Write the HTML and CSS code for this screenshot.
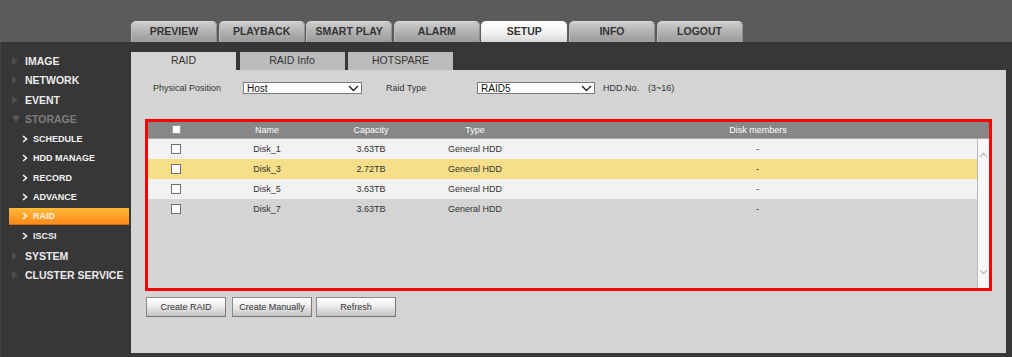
FILE: index.html
```html
<!DOCTYPE html>
<html>
<head>
<meta charset="utf-8">
<title>Setup - RAID</title>
<link rel="stylesheet" href="styles.css">
</head>
<body>
<header class="topbar">
  <nav class="tabs">
    <div class="tab">PREVIEW</div>
    <div class="tab">PLAYBACK</div>
    <div class="tab">SMART PLAY</div>
    <div class="tab">ALARM</div>
    <div class="tab active">SETUP</div>
    <div class="tab">INFO</div>
    <div class="tab">LOGOUT</div>
  </nav>
</header>
<div class="main">
  <aside class="sidebar">
    <ul class="menu">
      <li class="m1"><span class="tri"></span><span>IMAGE</span></li>
      <li class="m1"><span class="tri"></span><span>NETWORK</span></li>
      <li class="m1"><span class="tri"></span><span>EVENT</span></li>
      <li class="m1 open"><span class="tri down"></span><span>STORAGE</span></li>
      <li class="m2"><span class="m2-in"><svg class="chev" width="6" height="8" viewBox="0 0 6 8"><polyline points="1,1 4.5,4 1,7" fill="none" stroke="#f2f2f2" stroke-width="1.6"/></svg>SCHEDULE</span></li>
      <li class="m2"><span class="m2-in"><svg class="chev" width="6" height="8" viewBox="0 0 6 8"><polyline points="1,1 4.5,4 1,7" fill="none" stroke="#f2f2f2" stroke-width="1.6"/></svg>HDD MANAGE</span></li>
      <li class="m2"><span class="m2-in"><svg class="chev" width="6" height="8" viewBox="0 0 6 8"><polyline points="1,1 4.5,4 1,7" fill="none" stroke="#f2f2f2" stroke-width="1.6"/></svg>RECORD</span></li>
      <li class="m2"><span class="m2-in"><svg class="chev" width="6" height="8" viewBox="0 0 6 8"><polyline points="1,1 4.5,4 1,7" fill="none" stroke="#f2f2f2" stroke-width="1.6"/></svg>ADVANCE</span></li>
      <li class="m2 sel"><span class="m2-in"><svg class="chev" width="6" height="8" viewBox="0 0 6 8"><polyline points="1,1 4.5,4 1,7" fill="none" stroke="#fff4e0" stroke-width="1.6"/></svg>RAID</span></li>
      <li class="m2"><span class="m2-in"><svg class="chev" width="6" height="8" viewBox="0 0 6 8"><polyline points="1,1 4.5,4 1,7" fill="none" stroke="#f2f2f2" stroke-width="1.6"/></svg>ISCSI</span></li>
      <li class="m1"><span class="tri"></span><span>SYSTEM</span></li>
      <li class="m1"><span class="tri"></span><span>CLUSTER SERVICE</span></li>
    </ul>
  </aside>
  <section class="content">
    <div class="subtabs">
      <div class="subtab active">RAID</div>
      <div class="subtab">RAID Info</div>
      <div class="subtab">HOTSPARE</div>
    </div>
    <div class="panel">
      <div class="form-row">
        <label class="lbl lbl-pos">Physical Position</label>
        <div class="select sel-host"><span>Host</span><svg width="11" height="7" viewBox="0 0 11 7"><polyline points="1,1 5.5,5.5 10,1" fill="none" stroke="#222" stroke-width="1.4"/></svg></div>
        <label class="lbl lbl-type">Raid Type</label>
        <div class="select sel-type"><span>RAID5</span><svg width="11" height="7" viewBox="0 0 11 7"><polyline points="1,1 5.5,5.5 10,1" fill="none" stroke="#222" stroke-width="1.4"/></svg></div>
        <span class="lbl hdd">HDD.No.</span>
        <span class="lbl">(3~16)</span>
      </div>

      <div class="grid-box">
        <div class="grid-head">
          <div class="c c-chk"><span class="cb cb-head"></span></div>
          <div class="c c-name">Name</div>
          <div class="c c-cap">Capacity</div>
          <div class="c c-type">Type</div>
          <div class="c c-mem">Disk members</div>
        </div>
        <div class="grid-body">
          <div class="rows">
            <div class="row odd">
              <div class="c c-chk"><span class="cb"></span></div>
              <div class="c c-name">Disk_1</div>
              <div class="c c-cap">3.63TB</div>
              <div class="c c-type">General HDD</div>
              <div class="c c-mem">-</div>
            </div>
            <div class="row hover">
              <div class="c c-chk"><span class="cb"></span></div>
              <div class="c c-name">Disk_3</div>
              <div class="c c-cap">2.72TB</div>
              <div class="c c-type">General HDD</div>
              <div class="c c-mem">-</div>
            </div>
            <div class="row odd">
              <div class="c c-chk"><span class="cb"></span></div>
              <div class="c c-name">Disk_5</div>
              <div class="c c-cap">3.63TB</div>
              <div class="c c-type">General HDD</div>
              <div class="c c-mem">-</div>
            </div>
            <div class="row">
              <div class="c c-chk"><span class="cb"></span></div>
              <div class="c c-name">Disk_7</div>
              <div class="c c-cap">3.63TB</div>
              <div class="c c-type">General HDD</div>
              <div class="c c-mem">-</div>
            </div>
          </div>
          <div class="scroll">
            <svg width="9" height="6" viewBox="0 0 9 6"><polyline points="1,5 4.5,1.5 8,5" fill="none" stroke="#c4c4c4" stroke-width="1.6"/></svg>
            <svg width="9" height="6" viewBox="0 0 9 6"><polyline points="1,1 4.5,4.5 8,1" fill="none" stroke="#c4c4c4" stroke-width="1.6"/></svg>
          </div>
        </div>
      </div>

      <div class="buttons">
        <button class="btn">Create RAID</button>
        <button class="btn b2">Create Manually</button>
        <button class="btn b3">Refresh</button>
      </div>
    </div>
  </section>
</div>
</body>
</html>
```

FILE: styles.css
```css
* { box-sizing: border-box; }
html, body { margin: 0; padding: 0; }
body {
  width: 1012px;
  height: 357px;
  overflow: hidden;
  background: #373737;
  font-family: "Liberation Sans", Arial, sans-serif;
  color: #333;
}

/* ---------- top bar ---------- */
.topbar {
  height: 42px;
  background: #5b5b5b;
  display: flex;
  align-items: flex-end;
  padding-left: 131px;
}
.tabs { display: flex; }
.tab {
  width: 86px;
  height: 21px;
  margin-right: 1.6px;
  border-radius: 5px 5px 0 0;
  background: linear-gradient(#cdcdcd, #a7a7a7 70%, #9c9c9c);
  border-top: 1px solid #dadada;
  box-shadow: inset 1px 0 0 #bdbdbd, inset -1px 0 0 #8e8e8e;
  font-size: 10.5px;
  font-weight: bold;
  line-height: 19px;
  text-align: center;
  color: #333;
}
.tab.active {
  background: linear-gradient(#ffffff, #efefef 60%, #d6d6d6);
  border-top-color: #ffffff;
  box-shadow: none;
}

/* ---------- layout ---------- */
.main {
  display: flex;
  height: 315px;
}
.sidebar {
  width: 131px;
  flex: none;
  border-left: 1px solid #444;
}
.content {
  flex: 1;
  padding: 10px 6px 4px 0;
  display: flex;
  flex-direction: column;
}

/* ---------- sidebar menu ---------- */
.menu {
  list-style: none;
  margin: 0;
  padding: 9px 0 0 0;
}
.menu li {
  height: 19.5px;
  display: flex;
  align-items: center;
}
.m1 {
  padding-left: 11px;
  font-size: 10.5px;
  font-weight: bold;
  color: #ececec;
}
.tri {
  width: 0;
  height: 0;
  border-left: 6px solid #4e4e4e;
  border-top: 4px solid transparent;
  border-bottom: 4px solid transparent;
  margin-right: 7px;
}
.tri.down {
  border-left: 4px solid transparent;
  border-right: 4px solid transparent;
  border-top: 6px solid #595959;
  border-bottom: 0;
  margin-right: 5px;
}
.m1.open { color: #7d7d7d; }
.m2 {
  padding-left: 8px;
  font-size: 9px;
  font-weight: bold;
  color: #f2f2f2;
}
.m2-in {
  display: flex;
  align-items: center;
  width: 120px;
  height: 17px;
  padding-left: 13px;
}
.chev { margin-right: 5px; }
.m2.sel .m2-in {
  background: linear-gradient(#ffbb38, #ff9f2a 55%, #ff8a1c);
  border-bottom: 1px solid #d46a10;
  color: #fff4e4;
}

/* ---------- sub tabs ---------- */
.subtabs {
  display: flex;
  height: 18px;
}
.subtab {
  width: 105px;
  margin-right: 3.5px;
  background: #bcbcbc;
  font-size: 10.5px;
  line-height: 17px;
  text-align: center;
  color: #333;
}
.subtab.active { background: #d4d4d4; }

/* ---------- panel ---------- */
.panel {
  flex: 1;
  background: #d4d4d4;
  padding: 12px 0 0 14px;
}
.form-row {
  display: flex;
  align-items: center;
  height: 12px;
  padding-left: 8px;
}
.lbl {
  font-size: 9px;
  color: #333;
}
.lbl-pos { width: 90px; }
.lbl-type { width: 91px; }
.select {
  height: 12px;
  background: #fff;
  border: 1px solid #7a7a7a;
  display: flex;
  align-items: center;
  justify-content: space-between;
  padding: 0 2px 0 3px;
  font-size: 10px;
  color: #111;
}
.sel-host { width: 119px; margin-right: 24px; }
.sel-type { width: 118px; margin-right: 8px; }
.hdd { margin-right: 9px; }

/* ---------- grid ---------- */
.grid-box {
  margin-top: 25px;
  width: 847px;
  height: 172px;
  border: 3px solid #ff0000;
  display: flex;
  flex-direction: column;
}
.grid-head {
  height: 17px;
  flex: none;
  display: flex;
  background: #878787;
  border-bottom: 1px solid #a9a9a9;
  padding-right: 11px;
  color: #fff;
  font-size: 9px;
  align-items: center;
}
.c {
  text-align: center;
  display: flex;
  align-items: center;
  justify-content: center;
}
.c-chk { width: 56px; }
.c-name { width: 126px; }
.c-cap { width: 82px; }
.c-type { width: 126px; }
.c-mem { flex: 1; }
.cb {
  width: 10px;
  height: 10px;
  background: #fff;
  border: 1px solid #6f6f6f;
}
.cb-head {
  width: 9px;
  height: 9px;
  border-color: #9a9a9a;
  margin-bottom: 1px;
}
.grid-body {
  flex: 1;
  display: flex;
}
.rows {
  flex: 1;
  background: #d4d4d4;
}
.row {
  height: 20px;
  display: flex;
  font-size: 9px;
  color: #333;
}
.row .c { height: 20px; }
.row.odd { background: #f2f2f2; }
.row.hover { background: #f6df88; }
.scroll {
  width: 12px;
  flex: none;
  background: #f8f8f8;
  border-left: 1px solid #b9b9b9;
  display: flex;
  flex-direction: column;
  justify-content: space-between;
  align-items: center;
  padding: 13px 0 13px 0;
}

/* ---------- buttons ---------- */
.buttons {
  display: flex;
  margin-top: 6px;
  padding-left: 1px;
}
.btn {
  width: 80px;
  height: 20px;
  padding: 0;
  border: 1px solid #8a8a8a;
  border-right-color: #7a7a7a;
  border-bottom-color: #777;
  background: linear-gradient(#ffffff, #ececec 45%, #c4c4c4);
  font-family: "Liberation Sans", Arial, sans-serif;
  font-size: 9px;
  color: #333;
}
.b2 { margin-left: 6px; }
.b3 { margin-left: 4px; }
```
